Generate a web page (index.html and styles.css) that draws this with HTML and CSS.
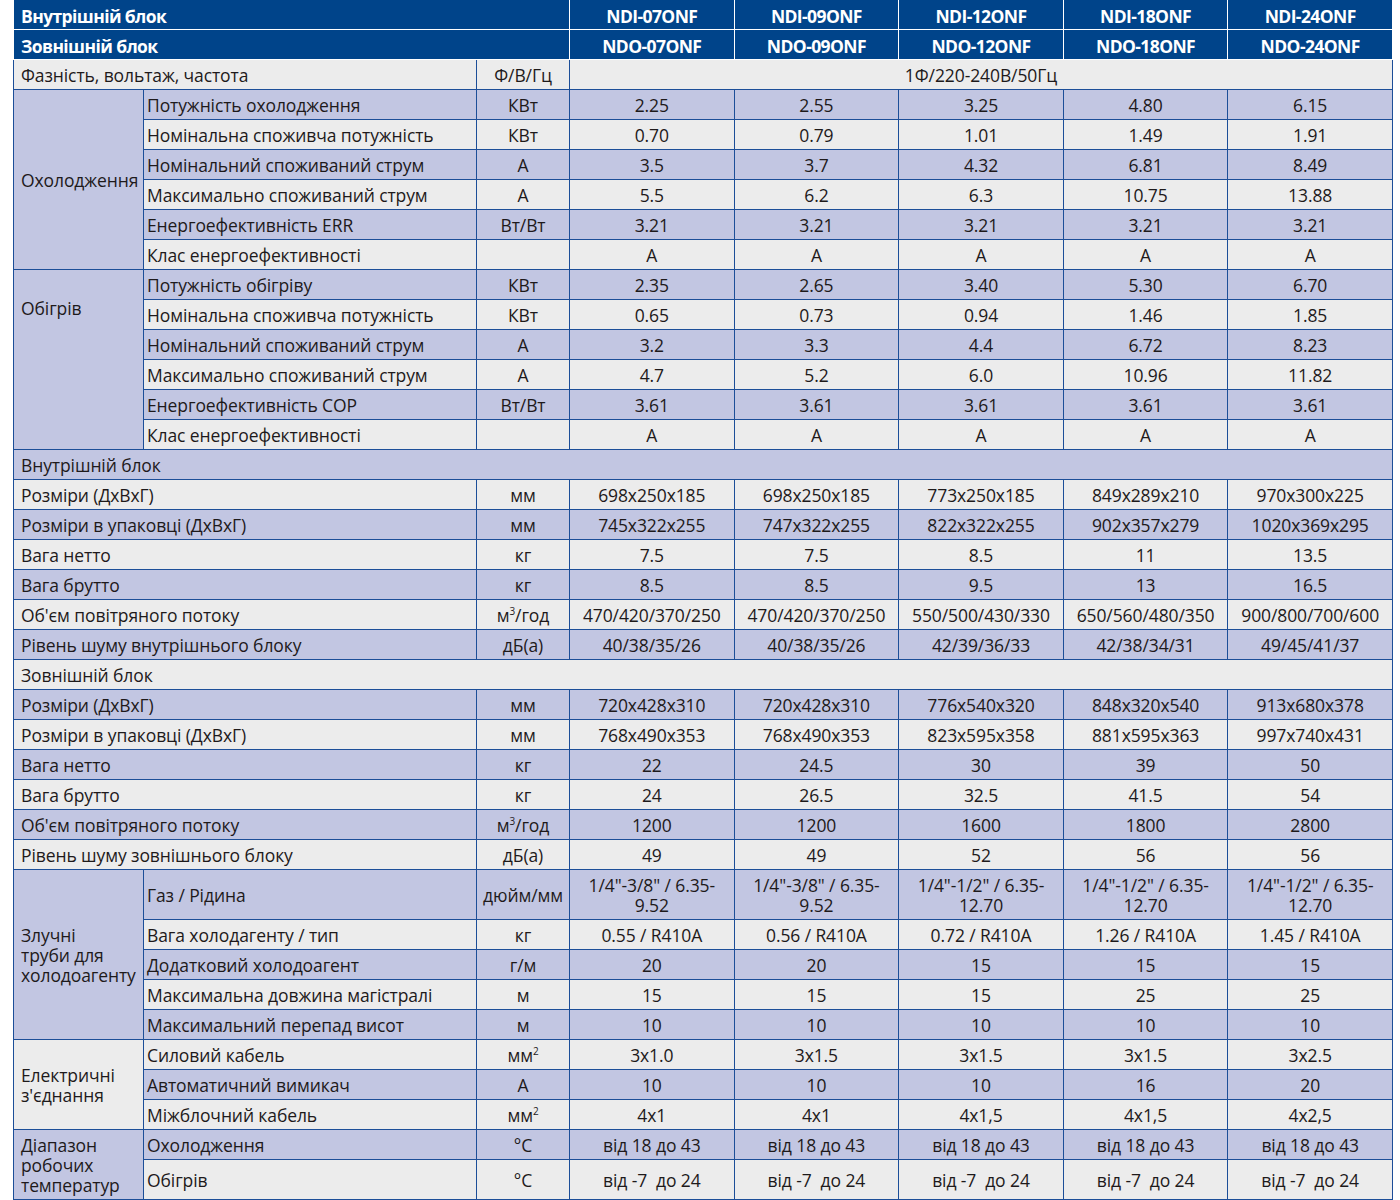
FILE: index.html
```html
<!DOCTYPE html>
<html lang="uk">
<head>
<meta charset="utf-8">
<title>Технічні характеристики</title>
<link rel="stylesheet" href="styles.css">
</head>
<body>
<table class="spec">
  <colgroup>
    <col class="c-group"><col class="c-param"><col class="c-unit">
    <col class="c-val"><col class="c-val"><col class="c-val"><col class="c-val"><col class="c-val">
  </colgroup>
  <thead>
    <tr class="hrow">
      <th colspan="3" class="hleft">Внутрішній блок</th>
      <th>NDI-07ONF</th><th>NDI-09ONF</th><th>NDI-12ONF</th><th>NDI-18ONF</th><th>NDI-24ONF</th>
    </tr>
    <tr class="hrow">
      <th colspan="3" class="hleft">Зовнішній блок</th>
      <th>NDO-07ONF</th><th>NDO-09ONF</th><th>NDO-12ONF</th><th>NDO-18ONF</th><th>NDO-24ONF</th>
    </tr>
  </thead>
  <tbody>
    <tr class="g"><td colspan="2" class="lbl">Фазність, вольтаж, частота</td><td>Ф/В/Гц</td><td colspan="5">1Ф/220-240В/50Гц</td></tr>

    <tr class="b"><td rowspan="6" class="grp b">Охолодження</td><td class="par">Потужність охолодження</td><td>КВт</td><td>2.25</td><td>2.55</td><td>3.25</td><td>4.80</td><td>6.15</td></tr>
    <tr class="g"><td class="par">Номінальна споживча потужність</td><td>КВт</td><td>0.70</td><td>0.79</td><td>1.01</td><td>1.49</td><td>1.91</td></tr>
    <tr class="b"><td class="par">Номінальний споживаний струм</td><td>А</td><td>3.5</td><td>3.7</td><td>4.32</td><td>6.81</td><td>8.49</td></tr>
    <tr class="g"><td class="par">Максимально споживаний струм</td><td>А</td><td>5.5</td><td>6.2</td><td>6.3</td><td>10.75</td><td>13.88</td></tr>
    <tr class="b"><td class="par">Енергоефективність ERR</td><td>Вт/Вт</td><td>3.21</td><td>3.21</td><td>3.21</td><td>3.21</td><td>3.21</td></tr>
    <tr class="g"><td class="par">Клас енергоефективності</td><td></td><td>A</td><td>A</td><td>A</td><td>A</td><td>A</td></tr>

    <tr class="b"><td rowspan="6" class="grp grp-top b">Обігрів</td><td class="par">Потужність обігріву</td><td>КВт</td><td>2.35</td><td>2.65</td><td>3.40</td><td>5.30</td><td>6.70</td></tr>
    <tr class="g"><td class="par">Номінальна споживча потужність</td><td>КВт</td><td>0.65</td><td>0.73</td><td>0.94</td><td>1.46</td><td>1.85</td></tr>
    <tr class="b"><td class="par">Номінальний споживаний струм</td><td>А</td><td>3.2</td><td>3.3</td><td>4.4</td><td>6.72</td><td>8.23</td></tr>
    <tr class="g"><td class="par">Максимально споживаний струм</td><td>А</td><td>4.7</td><td>5.2</td><td>6.0</td><td>10.96</td><td>11.82</td></tr>
    <tr class="b"><td class="par">Енергоефективність COP</td><td>Вт/Вт</td><td>3.61</td><td>3.61</td><td>3.61</td><td>3.61</td><td>3.61</td></tr>
    <tr class="g"><td class="par">Клас енергоефективності</td><td></td><td>A</td><td>A</td><td>A</td><td>A</td><td>A</td></tr>

    <tr class="b"><td colspan="8" class="lbl">Внутрішній блок</td></tr>
    <tr class="g"><td colspan="2" class="lbl">Розміри (ДхВхГ)</td><td>мм</td><td>698x250x185</td><td>698x250x185</td><td>773x250x185</td><td>849x289x210</td><td>970x300x225</td></tr>
    <tr class="b"><td colspan="2" class="lbl">Розміри в упаковці (ДхВхГ)</td><td>мм</td><td>745x322x255</td><td>747x322x255</td><td>822x322x255</td><td>902x357x279</td><td>1020x369x295</td></tr>
    <tr class="g"><td colspan="2" class="lbl">Вага нетто</td><td>кг</td><td>7.5</td><td>7.5</td><td>8.5</td><td>11</td><td>13.5</td></tr>
    <tr class="b"><td colspan="2" class="lbl">Вага брутто</td><td>кг</td><td>8.5</td><td>8.5</td><td>9.5</td><td>13</td><td>16.5</td></tr>
    <tr class="g"><td colspan="2" class="lbl">Об'єм повітряного потоку</td><td>м<sup>3</sup>/год</td><td>470/420/370/250</td><td>470/420/370/250</td><td>550/500/430/330</td><td>650/560/480/350</td><td>900/800/700/600</td></tr>
    <tr class="b"><td colspan="2" class="lbl">Рівень шуму внутрішнього блоку</td><td>дБ(а)</td><td>40/38/35/26</td><td>40/38/35/26</td><td>42/39/36/33</td><td>42/38/34/31</td><td>49/45/41/37</td></tr>

    <tr class="g"><td colspan="8" class="lbl">Зовнішній блок</td></tr>
    <tr class="b"><td colspan="2" class="lbl">Розміри (ДхВхГ)</td><td>мм</td><td>720x428x310</td><td>720x428x310</td><td>776x540x320</td><td>848x320x540</td><td>913x680x378</td></tr>
    <tr class="g"><td colspan="2" class="lbl">Розміри в упаковці (ДхВхГ)</td><td>мм</td><td>768x490x353</td><td>768x490x353</td><td>823x595x358</td><td>881x595x363</td><td>997x740x431</td></tr>
    <tr class="b"><td colspan="2" class="lbl">Вага нетто</td><td>кг</td><td>22</td><td>24.5</td><td>30</td><td>39</td><td>50</td></tr>
    <tr class="g"><td colspan="2" class="lbl">Вага брутто</td><td>кг</td><td>24</td><td>26.5</td><td>32.5</td><td>41.5</td><td>54</td></tr>
    <tr class="b"><td colspan="2" class="lbl">Об'єм повітряного потоку</td><td>м<sup>3</sup>/год</td><td>1200</td><td>1200</td><td>1600</td><td>1800</td><td>2800</td></tr>
    <tr class="g"><td colspan="2" class="lbl">Рівень шуму зовнішнього блоку</td><td>дБ(а)</td><td>49</td><td>49</td><td>52</td><td>56</td><td>56</td></tr>

    <tr class="b tall"><td rowspan="5" class="grp b">Злучні<br>труби для<br>холодоагенту</td><td class="par">Газ / Рідина</td><td>дюйм/мм</td><td class="two">1/4"-3/8" / 6.35-<br>9.52</td><td class="two">1/4"-3/8" / 6.35-<br>9.52</td><td class="two">1/4"-1/2" / 6.35-<br>12.70</td><td class="two">1/4"-1/2" / 6.35-<br>12.70</td><td class="two">1/4"-1/2" / 6.35-<br>12.70</td></tr>
    <tr class="g"><td class="par">Вага холодагенту / тип</td><td>кг</td><td>0.55 / R410A</td><td>0.56 / R410A</td><td>0.72 / R410A</td><td>1.26 / R410A</td><td>1.45 / R410A</td></tr>
    <tr class="b"><td class="par">Додатковий холодоагент</td><td>г/м</td><td>20</td><td>20</td><td>15</td><td>15</td><td>15</td></tr>
    <tr class="g"><td class="par">Максимальна довжина магістралі</td><td>м</td><td>15</td><td>15</td><td>15</td><td>25</td><td>25</td></tr>
    <tr class="b"><td class="par">Максимальний перепад висот</td><td>м</td><td>10</td><td>10</td><td>10</td><td>10</td><td>10</td></tr>

    <tr class="g"><td rowspan="3" class="grp g">Електричні<br>з'єднання</td><td class="par">Силовий кабель</td><td>мм<sup>2</sup></td><td>3x1.0</td><td>3x1.5</td><td>3x1.5</td><td>3x1.5</td><td>3x2.5</td></tr>
    <tr class="b"><td class="par">Автоматичний вимикач</td><td>А</td><td>10</td><td>10</td><td>10</td><td>16</td><td>20</td></tr>
    <tr class="g"><td class="par">Міжблочний кабель</td><td>мм<sup>2</sup></td><td>4x1</td><td>4x1</td><td>4x1,5</td><td>4x1,5</td><td>4x2,5</td></tr>

    <tr class="b"><td rowspan="2" class="grp b">Діапазон<br>робочих<br>температур</td><td class="par">Охолодження</td><td>°C</td><td>від 18 до 43</td><td>від 18 до 43</td><td>від 18 до 43</td><td>від 18 до 43</td><td>від 18 до 43</td></tr>
    <tr class="g last"><td class="par">Обігрів</td><td>°C</td><td>від -7&nbsp; до 24</td><td>від -7&nbsp; до 24</td><td>від -7&nbsp; до 24</td><td>від -7&nbsp; до 24</td><td>від -7&nbsp; до 24</td></tr>
  </tbody>
</table>
</body>
</html>
```

FILE: styles.css
```css
html, body {
  margin: 0;
  padding: 0;
  background: #ffffff;
}

body {
  font-family: "Open Sans", "Noto Sans", sans-serif;
  color: #1e1a1b;
}

.spec {
  margin-left: 13px;
  width: 1379px;
  border-collapse: collapse;
  table-layout: fixed;
  font-size: 17.5px;
  letter-spacing: -0.1px;
}

.c-group { width: 130px; }
.c-param { width: 333px; }
.c-unit  { width: 93px; }
.c-val   { width: 164.6px; }

.spec th,
.spec td {
  padding: 0;
  text-align: center;
  vertical-align: middle;
  white-space: nowrap;
  overflow: hidden;
}

.hrow th {
  height: 27px;
  padding-top: 2px;
  background: #00448a;
  color: #ffffff;
  font-weight: 700;
  font-size: 17.5px;
  letter-spacing: -0.6px;
  border: 1px solid #ffffff;
  border-top: none;
}

.hrow th.hleft {
  text-align: left;
  padding-left: 7px;
  letter-spacing: -0.6px;
}

.spec tbody td {
  height: 29px;
  border: 1px solid #1c4e98;
  line-height: 20px;
}

.spec tbody tr.tall td { height: 49px; }
.spec tbody tr.last td { height: 39px; }

tr.g td, td.g { background: #ececec; }
tr.b td, td.b { background: #c2c6e2; }

.spec td.lbl {
  text-align: left;
  padding-left: 7px;
}

.spec td.par {
  text-align: left;
  padding-left: 3px;
}

.spec td.grp {
  text-align: left;
  padding-left: 7px;
  white-space: normal;
}

.spec td.grp-top {
  vertical-align: top;
  padding-top: 28px;
}

.spec td.two {
  line-height: 20px;
  white-space: normal;
}

sup {
  font-size: 10px;
  line-height: 0;
  vertical-align: 7px;
}
```
